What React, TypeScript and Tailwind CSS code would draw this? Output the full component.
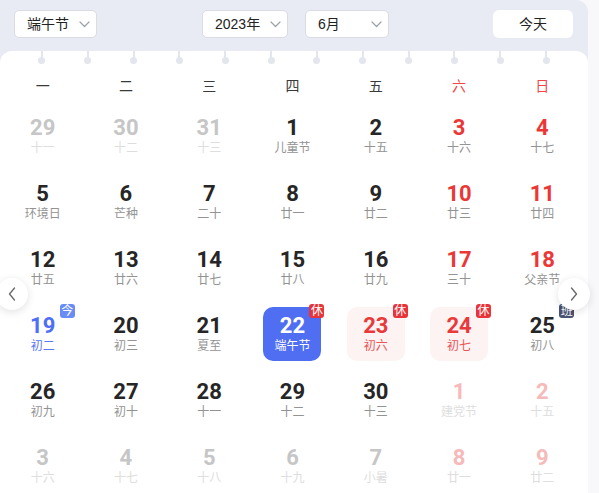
import React from "react";

type Kind = "prev" | "cur" | "next";
type Cell = {
  d: number;
  l: string;
  k: Kind;
  w?: boolean;
  today?: boolean;
  sel?: boolean;
  hol?: boolean;
  badge?: "休" | "班" | "今";
};

const rows: Cell[][] = [
  [
    { d: 29, l: "十一", k: "prev" },
    { d: 30, l: "十二", k: "prev" },
    { d: 31, l: "十三", k: "prev" },
    { d: 1, l: "儿童节", k: "cur" },
    { d: 2, l: "十五", k: "cur" },
    { d: 3, l: "十六", k: "cur", w: true },
    { d: 4, l: "十七", k: "cur", w: true },
  ],
  [
    { d: 5, l: "环境日", k: "cur" },
    { d: 6, l: "芒种", k: "cur" },
    { d: 7, l: "二十", k: "cur" },
    { d: 8, l: "廿一", k: "cur" },
    { d: 9, l: "廿二", k: "cur" },
    { d: 10, l: "廿三", k: "cur", w: true },
    { d: 11, l: "廿四", k: "cur", w: true },
  ],
  [
    { d: 12, l: "廿五", k: "cur" },
    { d: 13, l: "廿六", k: "cur" },
    { d: 14, l: "廿七", k: "cur" },
    { d: 15, l: "廿八", k: "cur" },
    { d: 16, l: "廿九", k: "cur" },
    { d: 17, l: "三十", k: "cur", w: true },
    { d: 18, l: "父亲节", k: "cur", w: true },
  ],
  [
    { d: 19, l: "初二", k: "cur", today: true, badge: "今" },
    { d: 20, l: "初三", k: "cur" },
    { d: 21, l: "夏至", k: "cur" },
    { d: 22, l: "端午节", k: "cur", sel: true, badge: "休" },
    { d: 23, l: "初六", k: "cur", w: true, hol: true, badge: "休" },
    { d: 24, l: "初七", k: "cur", w: true, hol: true, badge: "休" },
    { d: 25, l: "初八", k: "cur", badge: "班" },
  ],
  [
    { d: 26, l: "初九", k: "cur" },
    { d: 27, l: "初十", k: "cur" },
    { d: 28, l: "十一", k: "cur" },
    { d: 29, l: "十二", k: "cur" },
    { d: 30, l: "十三", k: "cur" },
    { d: 1, l: "建党节", k: "next", w: true },
    { d: 2, l: "十五", k: "next", w: true },
  ],
  [
    { d: 3, l: "十六", k: "next" },
    { d: 4, l: "十七", k: "next" },
    { d: 5, l: "十八", k: "next" },
    { d: 6, l: "十九", k: "next" },
    { d: 7, l: "小暑", k: "next" },
    { d: 8, l: "廿一", k: "next", w: true },
    { d: 9, l: "廿二", k: "next", w: true },
  ],
];

const weeks = ["一", "二", "三", "四", "五", "六", "日"];

function Chevron() {
  return (
    <svg width="11" height="7" viewBox="0 0 11 7" fill="none">
      <path d="M1 1l4.5 4.5L10 1" stroke="#9ca0a8" strokeWidth="1.2" strokeLinecap="round" strokeLinejoin="round" />
    </svg>
  );
}

function Select({ label, w, pl }: { label: string; w: string; pl: string }) {
  return (
    <div
      className={`${w} ${pl} h-[28px] bg-white border border-[#d9dce3] rounded-[5px] flex items-center justify-between pr-[6px] text-[14px] text-[#222]`}
    >
      <span>{label}</span>
      <Chevron />
    </div>
  );
}

function DayCell({ c }: { c: Cell }) {
  let num = "text-[#262626]";
  let lun = "text-[#939393]";
  let bg = "";
  if (c.k !== "cur") {
    num = c.w ? "text-[#f6baba]" : "text-[#c6c6c6]";
    lun = "text-[#dedede]";
  } else if (c.sel) {
    num = "text-white";
    lun = "text-white";
    bg = "bg-[#4f6ef2]";
  } else if (c.hol) {
    num = "text-[#e83a3a]";
    lun = "text-[#e85555]";
    bg = "bg-[#fdf3f3]";
  } else if (c.today) {
    num = "text-[#4d6ef5]";
    lun = "text-[#5a78f2]";
  } else if (c.w) {
    num = "text-[#ec3737]";
  }
  const badgeBg =
    c.badge === "休" ? "bg-[#e8333a]" : c.badge === "班" ? "bg-[#4a5272]" : "bg-[#6a8cf6]";
  return (
    <div className="h-[66px] flex items-center justify-center">
      <div className={`relative w-[58px] h-[54px] rounded-[10px] pt-[7px] flex flex-col items-center ${bg}`}>
        <div
          className={`text-[22px] leading-[24px] font-bold ${num}`}
          style={{ fontFamily: "Roboto, 'Liberation Sans', sans-serif" }}
        >
          {c.d}
        </div>
        <div className={`text-[12px] leading-[16px] ${lun}`}>{c.l}</div>
        {c.badge && (
          <div
            className={`absolute top-[-3px] right-[-3px] w-[15px] h-[14px] rounded-[3px] ${badgeBg} text-white text-[12px] leading-[14px] flex items-center justify-center`}
          >
            {c.badge}
          </div>
        )}
      </div>
    </div>
  );
}

function NavBtn({ dir }: { dir: "l" | "r" }) {
  return (
    <div
      className={`absolute top-[227px] ${dir === "l" ? "left-[-4px]" : "right-[-2px]"} w-[32px] h-[32px] rounded-full bg-white shadow-[0_2px_8px_rgba(0,0,0,0.12)] flex items-center justify-center`}
    >
      <svg width="8" height="14" viewBox="0 0 8 14" fill="none">
        <path
          d={dir === "l" ? "M6.5 1L1.5 7l5 6" : "M1.5 1l5 6-5 6"}
          stroke="#666"
          strokeWidth="1.3"
          strokeLinecap="round"
          strokeLinejoin="round"
        />
      </svg>
    </div>
  );
}

export default function App() {
  return (
    <div
      className="w-[599px] h-[493px] overflow-hidden flex items-start bg-[#f8f8fa]"
      style={{ fontFamily: "'Liberation Sans', 'Noto Sans CJK SC', sans-serif" }}
    >
      <div className="w-[588px] shrink-0 bg-[#e8ebf3] rounded-tr-[12px] flex flex-col">
        <div className="h-[51px] shrink-0 flex items-start pt-[10px] pl-[14px]">
          <Select label="端午节" w="w-[83px]" pl="pl-[12px]" />
          <div className="ml-[105px]">
            <Select label="2023年" w="w-[86px]" pl="pl-[12px]" />
          </div>
          <div className="ml-[17px]">
            <Select label="6月" w="w-[84px]" pl="pl-[12px]" />
          </div>
          <div className="ml-[104px] w-[80px] h-[28px] bg-white rounded-[6px] flex items-center justify-center text-[14px] text-[#222]">
            今天
          </div>
        </div>
        <div className="relative shrink-0 bg-white rounded-t-[12px] pt-[18px]">
          <div className="absolute top-0 left-[19px] right-[19px] flex">
            {Array.from({ length: 12 }).map((_, i) => (
              <div key={i} className="flex-1 flex flex-col items-center">
                <div className="w-[2px] h-[7px] bg-[#e4e6ee]" />
                <div className="w-[7px] h-[7px] rounded-full bg-[#e4e6ee] -mt-[1px]" />
              </div>
            ))}
          </div>
          <div className="ml-[1px] w-[583px]">
            <div className="grid grid-cols-7 h-[34px] items-center text-[14px]">
              {weeks.map((w, i) => (
                <div key={w} className={`text-center ${i >= 5 ? "text-[#f04646]" : "text-[#3a3a3a]"}`}>
                  {w}
                </div>
              ))}
            </div>
            {rows.map((r, ri) => (
              <div key={ri} className="grid grid-cols-7">
                {r.map((c, ci) => (
                  <DayCell key={ci} c={c} />
                ))}
              </div>
            ))}
          </div>
          <NavBtn dir="l" />
          <NavBtn dir="r" />
        </div>
      </div>
    </div>
  );
}
